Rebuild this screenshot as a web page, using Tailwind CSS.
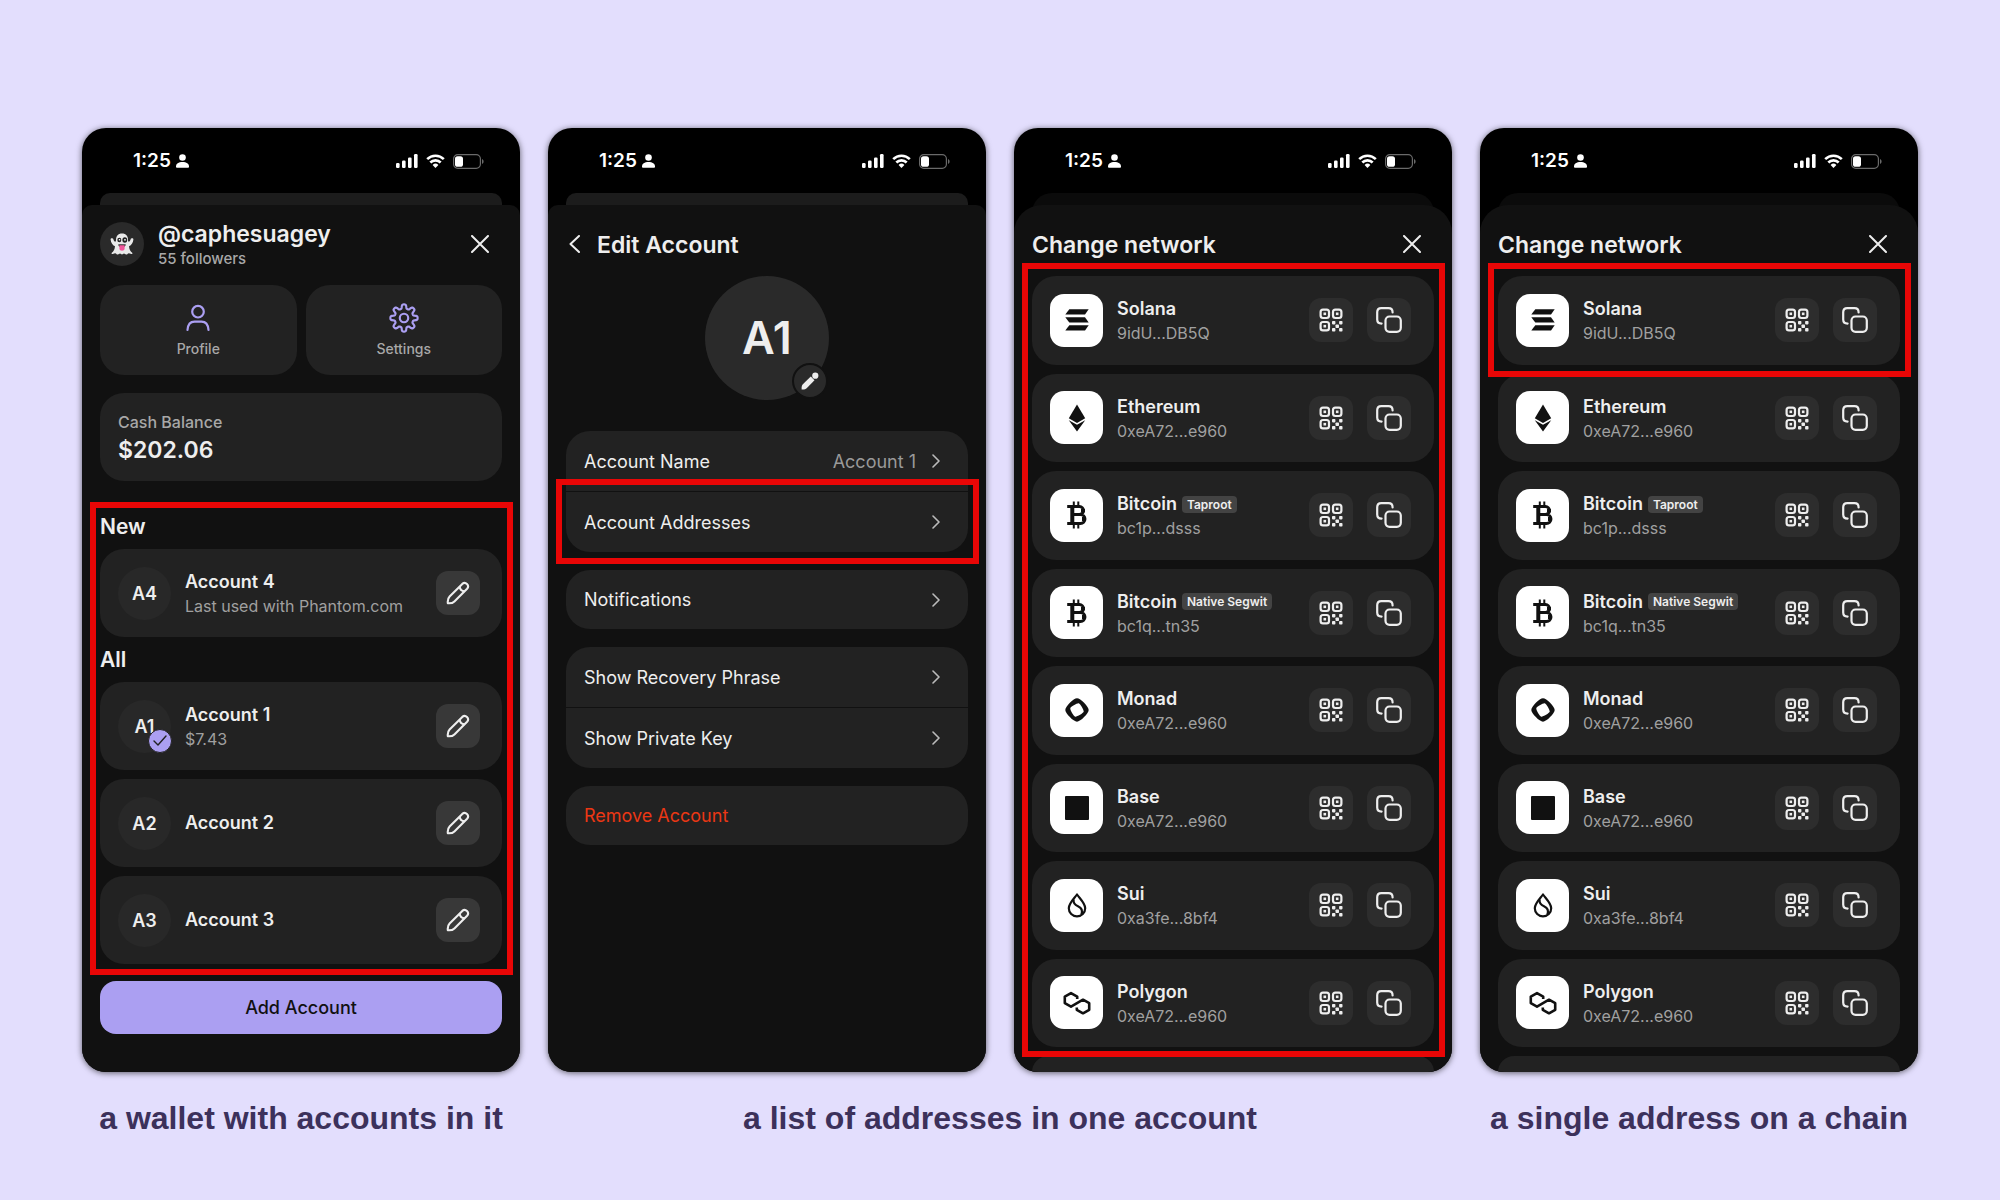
<!DOCTYPE html>
<html lang="en">
<head>
    <meta charset="UTF-8">
    <meta name="viewport" content="width=device-width, initial-scale=1.0">
    <title>Wallet, accounts and addresses</title>
    <script src="https://cdn.jsdelivr.net/npm/@tailwindcss/browser@4"></script>
</head>
<body class="min-h-screen bg-[#e3defd] font-['Inter','Liberation_Sans',sans-serif] text-[#eeeeee] antialiased">

    <!-- Icons -->
    <svg class="hidden" xmlns="http://www.w3.org/2000/svg">
        <symbol id="i-person" viewBox="0 0 13 14">
            <circle cx="6.5" cy="3.5" r="3.3" fill="currentColor"/>
            <path d="M0 12.6C0 9.6 2.6 8 6.5 8S13 9.6 13 12.6c0 .9-.4 1.2-1.2 1.2H1.2C.4 13.8 0 13.5 0 12.6z" fill="currentColor"/>
        </symbol>
        <symbol id="i-signal" viewBox="0 0 22 14">
            <g fill="currentColor">
                <rect x="0" y="9" width="3.6" height="5" rx="1.2"/>
                <rect x="6" y="6.5" width="3.6" height="7.5" rx="1.2"/>
                <rect x="12" y="3.5" width="3.6" height="10.5" rx="1.2"/>
                <rect x="18" y="0" width="3.6" height="14" rx="1.2"/>
            </g>
        </symbol>
        <symbol id="i-wifi" viewBox="0 0 19 14">
            <g fill="none" stroke="currentColor" stroke-width="2.6">
                <path d="M1.2 5.1a11.8 11.8 0 0 1 16.6 0"/>
                <path d="M4.3 8.5a7.4 7.4 0 0 1 10.4 0"/>
            </g>
            <path d="M9.5 14l-2.9-3a4.2 4.2 0 0 1 5.8 0z" fill="currentColor"/>
        </symbol>
        <symbol id="i-battery" viewBox="0 0 31 15">
            <rect x=".6" y=".6" width="26.8" height="13.8" rx="4.2" fill="none" stroke="#6a6a6a" stroke-width="1.2"/>
            <path d="M29 5v5c1-.4 1.6-1.4 1.6-2.5S30 5.4 29 5z" fill="#6a6a6a"/>
            <rect x="2" y="2.2" width="8" height="10.6" rx="2.6" fill="currentColor"/>
        </symbol>
        <symbol id="i-close" viewBox="0 0 18 18">
            <path d="M1 1l16 16M17 1L1 17" fill="none" stroke="currentColor" stroke-width="2" stroke-linecap="round"/>
        </symbol>
        <symbol id="i-back" viewBox="0 0 11 18">
            <path d="M10 1L1.5 9l8.5 8" fill="none" stroke="currentColor" stroke-width="2" stroke-linecap="round" stroke-linejoin="round"/>
        </symbol>
        <symbol id="i-next" viewBox="0 0 8 14">
            <path d="M1 1l6 6-6 6" fill="none" stroke="currentColor" stroke-width="1.6" stroke-linecap="round" stroke-linejoin="round"/>
        </symbol>
        <symbol id="i-profile" viewBox="0 0 24 27">
            <g fill="none" stroke="currentColor" stroke-width="2.2" stroke-linecap="round">
                <circle cx="12" cy="7.2" r="5.8"/>
                <path d="M1.5 25.5c.4-5.5 3-8.3 7-8.3h7c4 0 6.6 2.8 7 8.3"/>
            </g>
        </symbol>
        <symbol id="i-gear" viewBox="0 0 32 32">
            <g fill="none" stroke="currentColor" stroke-width="2.3" stroke-linejoin="round">
                <circle cx="16" cy="16" r="4.5"/>
                <path id="gear-path" d=""/>
            </g>
        </symbol>
        <symbol id="i-pencil" viewBox="0 0 24 24">
            <g fill="none" stroke="currentColor" stroke-width="2.1" stroke-linejoin="round">
                <path d="M1.8 22.2c-.3-3.2.1-4.9 1.8-6.6L16.3 2.9a3.4 3.4 0 0 1 4.8 4.8L8.4 20.4c-1.7 1.7-3.4 2.1-6.6 1.8z"/>
                <path d="M13.6 5.6c.4 2.8 2 4.4 4.8 4.8"/>
            </g>
        </symbol>
        <symbol id="i-pencil-solid" viewBox="0 0 18 18">
            <path d="M.6 17.4c-.1-2.6.1-3.9 1.5-5.3L9.8 4.5l3.7 3.7-7.6 7.7C4.5 17.3 3.2 17.5.6 17.4z" fill="currentColor"/>
            <circle cx="14.3" cy="3.7" r="3.1" fill="currentColor"/>
        </symbol>
        <symbol id="i-check" viewBox="0 0 14 11">
            <path d="M1 6l4 4 8-9" fill="none" stroke="currentColor" stroke-width="1.4" stroke-linecap="round" stroke-linejoin="round"/>
        </symbol>
        <symbol id="i-qr" viewBox="0 0 24 24">
            <g fill="none" stroke="currentColor" stroke-width="2.2">
                <rect x="1.6" y="1.6" width="8.4" height="8.4" rx="2.4"/>
                <rect x="14" y="1.6" width="8.4" height="8.4" rx="2.4"/>
                <rect x="1.6" y="14" width="8.4" height="8.4" rx="2.4"/>
            </g>
            <g fill="currentColor">
                <rect x="4.5" y="4.5" width="2.6" height="2.6"/>
                <rect x="16.9" y="4.5" width="2.6" height="2.6"/>
                <rect x="4.5" y="16.9" width="2.6" height="2.6"/>
                <rect x="13" y="13" width="3.4" height="3.4" rx=".8"/>
                <rect x="20.1" y="13" width="3.4" height="3.4" rx=".8"/>
                <rect x="16.5" y="16.5" width="3.5" height="3.5" rx=".8"/>
                <rect x="13" y="20.1" width="3.4" height="3.4" rx=".8"/>
                <rect x="20.1" y="20.1" width="3.4" height="3.4" rx=".8"/>
            </g>
        </symbol>
        <symbol id="i-copy" viewBox="0 0 26 26">
            <g fill="none" stroke="currentColor" stroke-width="2.2" stroke-linecap="round">
                <rect x="9.5" y="9.5" width="15.3" height="15.3" rx="4"/>
                <path d="M5.6 16.6C2.5 16.6 1.2 15.3 1.2 12.5V5.3c0-2.6 1.5-4.1 4.1-4.1h7.2c2.8 0 4.1 1.3 4.1 4.2"/>
            </g>
        </symbol>
        <symbol id="i-ghost" viewBox="0 0 24 22">
            <path d="M12 .5c-4 0-6 2.500-6 6.500 0 1.400-.4 2-1.200 1.600C4 8.200 3.600 7 3.400 6.200 3 4.800.4 4.800.6 6.400c.3 3 1.800 5.700 4.400 6.900-.2 3.200-1.600 5.200-3.200 6.500-.7.7 0 1.500 1 1.200 1.200-.4 2-.8 2.900-.6.9.3 1 1.100 2.100 1.100s1.400-.8 2.200-.9c.8 0 1.200.9 2 .9s1.200-.9 2-.9c.8.1 1.100.9 2.200.9s1.200-.8 2.100-1.100c.9-.2 1.700.2 2.900.6 1 .3 1.700-.5 1-1.200-1.600-1.300-3-3.300-3.200-6.500 2.600-1.200 4.100-3.900 4.400-6.900.2-1.600-2.400-1.600-2.800-.2-.2.8-.6 2-1.400 2.400-.8.4-1.200-.2-1.200-1.600 0-4-2-6.500-6-6.500z" fill="#e9e9e9"/>
            <ellipse cx="9.3" cy="7" rx="2" ry="2.3" fill="#222222"/>
            <ellipse cx="14.8" cy="7" rx="2.4" ry="2.7" fill="#222222"/>
            <circle cx="9.5" cy="6.8" r=".8" fill="#ffffff"/>
            <circle cx="15" cy="6.8" r=".9" fill="#ffffff"/>
            <path d="M8.3 11.2h7.4c.2 2.2-1.2 2.8-3.7 2.8s-3.9-.6-3.7-2.8z" fill="#333333"/>
            <path d="M9.4 12.2h5.2v3.4c0 3-5.2 3-5.2 0z" fill="#f0569a"/>
        </symbol>

        <!-- Network logos -->
        <symbol id="n-solana" viewBox="0 0 28 28">
            <g fill="#111111">
                <path d="M6.3 3.2H25.7l-3.7 5.4H2.3z"/>
                <path d="M2.3 11.3H22l3.7 5.2H6.3z"/>
                <path d="M6.3 19.2H25.7l-3.7 5.3H2.3z"/>
            </g>
        </symbol>
        <symbol id="n-ethereum" viewBox="0 0 28 28">
            <g fill="#111111">
                <path d="M14 .5l8.2 13.8L14 19.1l-8.2-4.8z"/>
                <path d="M5.8 16.2l8.2 4.6 8.2-4.6L14 27.5z"/>
            </g>
        </symbol>
        <symbol id="n-bitcoin" viewBox="0 0 28 28">
            <g fill="none" stroke="#111111">
                <path stroke-width="3" d="M4.2 5.6h12.3a3.8 3.8 0 0 1 0 7.9H9M9 13.5h8.5a4.4 4.4 0 0 1 0 8.9H4.2"/>
                <path stroke-width="4" d="M9.3 5.6v16.8M20 8v3.2M21 16v4"/>
                <path stroke-width="2" d="M10.8 .4v5M15.3 .4v5M10.8 22.6v5M15.3 22.6v5"/>
            </g>
        </symbol>
        <symbol id="n-monad" viewBox="0 0 28 28">
            <path fill="#111111" fill-rule="evenodd" d="M14 2.3c-3.4 0-11.7 8.3-11.7 11.7S10.6 25.7 14 25.7 25.7 17.4 25.7 14 17.4 2.3 14 2.3zm-1.8 18.4c-1.4-.4-5.3-7-4.9-8.5.4-1.4 7-5.3 8.5-4.9 1.4.4 5.3 7 4.9 8.5-.4 1.4-7 5.3-8.5 4.9z"/>
        </symbol>
        <symbol id="n-base" viewBox="0 0 28 28">
            <rect x="2" y="2" width="24" height="24" rx="1" fill="#111111"/>
        </symbol>
        <symbol id="n-sui" viewBox="0 0 28 28">
            <g fill="none" stroke="#111111" stroke-width="2.2" stroke-linejoin="round">
                <path d="M14 3.5c2.5 3.7 8.2 8.7 8.2 13.7a8.2 8.2 0 0 1-16.4 0c0-5 5.7-10 8.2-13.7z"/>
                <path d="M10.6 8.5c-.5 3.5 1 5.3 4.4 6.7 3.4 1.5 4.9 4.3 3.4 8.3"/>
            </g>
        </symbol>
        <symbol id="n-polygon" viewBox="0 0 28 28">
            <path fill="none" stroke="#111111" stroke-width="2.6" stroke-linejoin="round" d="M14.2 10V7.6L8 4.1 1.8 7.6v6.5L8 17.6l12-6.9 6.2 3.5v6.6L20 24.3l-6.2-3.5v-2.4"/>
        </symbol>
    </svg>

    <main class="grid grid-cols-4 gap-x-[28px] gap-y-[26px] px-[82px] pt-[128px] pb-[60px]">

        <!-- Phone 1: account list -->
        <section class="flex aspect-[438/944] flex-col overflow-hidden rounded-[24px] bg-black shadow-[0_1px_6px_rgba(0,0,0,0.6)]">
            <div data-status></div>
            <div class="mx-[18px] -mb-[18px] h-[30px] rounded-t-[10px] bg-[#1c1c1c]"></div>
            <div class="relative flex-1 rounded-t-[10px] bg-[#111111] px-[18px] pt-[17px]">
                <header class="flex h-[44px] items-center">
                    <span class="flex size-[44px] items-center justify-center rounded-full bg-[#2a2a2a]">
                        <svg class="h-[22px] w-[24px]"><use href="#i-ghost"/></svg>
                    </span>
                    <div class="ml-[14px] flex-1 pt-[2px]">
                        <h2 class="text-[23px] leading-[28px] font-semibold">@caphesuagey</h2>
                        <p class="text-[15px] leading-[22px] font-medium text-[#a8a8a8]">55 followers</p>
                    </div>
                    <button type="button" aria-label="Close" class="mr-[13px]"><svg class="size-[18px]"><use href="#i-close"/></svg></button>
                </header>

                <div class="mt-[19px] grid grid-cols-2 gap-[9px]">
                    <button type="button" class="flex h-[90px] flex-col items-center rounded-[24px] bg-[#222222] pt-[18px]">
                        <svg class="h-[30px] w-[24px] text-[#ab9ff2]"><use href="#i-profile"/></svg>
                        <span class="mt-[6px] text-[14px] leading-[20px] font-medium text-[#a8a8a8]">Profile</span>
                    </button>
                    <button type="button" class="flex h-[90px] flex-col items-center rounded-[24px] bg-[#222222] pt-[18px]">
                        <svg class="h-[30px] w-[32px] text-[#ab9ff2]"><use href="#i-gear"/></svg>
                        <span class="mt-[6px] text-[14px] leading-[20px] font-medium text-[#a8a8a8]">Settings</span>
                    </button>
                </div>

                <div class="mt-[18px] flex h-[88px] flex-col justify-center rounded-[24px] bg-[#222222] px-[18px]">
                    <p class="text-[16px] leading-[26px] font-medium text-[#a8a8a8]">Cash Balance</p>
                    <p class="text-[23px] leading-[30px] font-semibold">$202.06</p>
                </div>

                <div class="relative mt-[31px]">
                    <h3 class="mb-[7px] text-[21px] leading-[30px] font-semibold">New</h3>
                    <ul data-accounts="new" class="flex flex-col gap-[9px]"></ul>
                    <h3 class="mt-[8px] mb-[7px] text-[21px] leading-[30px] font-semibold">All</h3>
                    <ul data-accounts="all" class="flex flex-col gap-[9px]"></ul>
                    <div class="pointer-events-none absolute -top-[10px] -right-[11px] -bottom-[11px] -left-[10px] border-[6px] border-[#e90606]"></div>
                </div>

                <button type="button" class="mt-[17px] h-[53px] w-full rounded-[16px] bg-[#ab9ff2] text-[18px] font-medium text-[#111111]">Add Account</button>
            </div>
        </section>

        <!-- Phone 2: edit account -->
        <section class="flex aspect-[438/944] flex-col overflow-hidden rounded-[24px] bg-black shadow-[0_1px_6px_rgba(0,0,0,0.6)]">
            <div data-status></div>
            <div class="mx-[18px] -mb-[18px] h-[30px] rounded-t-[10px] bg-[#1c1c1c]"></div>
            <div class="relative flex-1 rounded-t-[10px] bg-[#111111] px-[18px] pt-[17px]">
                <header class="flex h-[44px] items-center">
                    <button type="button" aria-label="Back" class="ml-[3px]"><svg class="h-[18px] w-[11px]"><use href="#i-back"/></svg></button>
                    <h2 class="ml-[17px] pt-[2px] text-[23px] leading-[28px] font-semibold">Edit Account</h2>
                </header>

                <div class="relative mx-auto mt-[10px] flex size-[124px] items-center justify-center rounded-full bg-[#2a2a2a] text-[45px] font-semibold">
                    A1
                    <button type="button" aria-label="Change picture" class="absolute right-[1px] bottom-[1px] flex size-[36px] items-center justify-center rounded-full border-2 border-[#111111] bg-[#2a2a2a]">
                        <svg class="size-[18px]"><use href="#i-pencil-solid"/></svg>
                    </button>
                </div>

                <nav class="mt-[31px] flex flex-col gap-[18px] text-[18px]">
                    <div class="rounded-[24px] bg-[#222222]">
                        <a href="#name" class="flex h-[61px] items-center border-b border-[#111111] pr-[28px] pl-[18px]">
                            <span class="flex-1">Account Name</span>
                            <span class="mr-[16px] text-[#999999]">Account 1</span>
                            <svg class="h-[14px] w-[8px] text-[#bbbbbb]"><use href="#i-next"/></svg>
                        </a>
                        <a href="#addresses" class="relative flex h-[60px] items-center pr-[28px] pl-[18px]">
                            <span class="flex-1">Account Addresses</span>
                            <svg class="h-[14px] w-[8px] text-[#bbbbbb]"><use href="#i-next"/></svg>
                            <span class="pointer-events-none absolute -top-[13px] -right-[11px] -bottom-[12px] -left-[10px] border-[6px] border-[#e90606]"></span>
                        </a>
                    </div>
                    <div class="rounded-[24px] bg-[#222222]">
                        <a href="#notifications" class="flex h-[59px] items-center pr-[28px] pl-[18px]">
                            <span class="flex-1">Notifications</span>
                            <svg class="h-[14px] w-[8px] text-[#bbbbbb]"><use href="#i-next"/></svg>
                        </a>
                    </div>
                    <div class="rounded-[24px] bg-[#222222]">
                        <a href="#phrase" class="flex h-[61px] items-center border-b border-[#111111] pr-[28px] pl-[18px]">
                            <span class="flex-1">Show Recovery Phrase</span>
                            <svg class="h-[14px] w-[8px] text-[#bbbbbb]"><use href="#i-next"/></svg>
                        </a>
                        <a href="#key" class="flex h-[60px] items-center pr-[28px] pl-[18px]">
                            <span class="flex-1">Show Private Key</span>
                            <svg class="h-[14px] w-[8px] text-[#bbbbbb]"><use href="#i-next"/></svg>
                        </a>
                    </div>
                    <button type="button" class="h-[59px] rounded-[24px] bg-[#222222] px-[18px] text-left text-[#eb3714]">Remove Account</button>
                </nav>
            </div>
        </section>

        <!-- Phone 3: every address -->
        <section class="flex aspect-[438/944] flex-col overflow-hidden rounded-[24px] bg-black shadow-[0_1px_6px_rgba(0,0,0,0.6)]">
            <div data-status></div>
            <div class="mx-[18px] -mb-[18px] h-[30px] rounded-t-[20px] bg-[#0b0b0b]"></div>
            <div class="relative flex flex-1 flex-col rounded-t-[28px] bg-[#111111] px-[18px] pt-[17px]">
                <header class="mb-[10px] flex h-[44px] items-center justify-between">
                    <h2 class="pt-[2px] text-[23px] leading-[28px] font-semibold">Change network</h2>
                    <button type="button" aria-label="Close" class="mr-[13px]"><svg class="size-[18px]"><use href="#i-close"/></svg></button>
                </header>
                <div class="relative flex flex-1 flex-col">
                    <ul data-networks class="grid flex-1 auto-rows-fr gap-[9px]"></ul>
                    <div class="pointer-events-none absolute -top-[13px] -right-[11px] -bottom-[10px] -left-[10px] z-10 border-[6px] border-[#e90606]"></div>
                </div>
                <div class="mt-[9px] h-[16px] rounded-t-[24px] bg-[#222222]"></div>
            </div>
        </section>

        <!-- Phone 4: one address -->
        <section class="flex aspect-[438/944] flex-col overflow-hidden rounded-[24px] bg-black shadow-[0_1px_6px_rgba(0,0,0,0.6)]">
            <div data-status></div>
            <div class="mx-[18px] -mb-[18px] h-[30px] rounded-t-[20px] bg-[#0b0b0b]"></div>
            <div class="relative flex flex-1 flex-col rounded-t-[28px] bg-[#111111] px-[18px] pt-[17px]">
                <header class="mb-[10px] flex h-[44px] items-center justify-between">
                    <h2 class="pt-[2px] text-[23px] leading-[28px] font-semibold">Change network</h2>
                    <button type="button" aria-label="Close" class="mr-[13px]"><svg class="size-[18px]"><use href="#i-close"/></svg></button>
                </header>
                <ul data-networks="first" class="grid flex-1 auto-rows-fr gap-[9px]"></ul>
                <div class="mt-[9px] h-[16px] rounded-t-[24px] bg-[#222222]"></div>
            </div>
        </section>

        <!-- Captions -->
        <p class="text-center font-['Liberation_Sans',sans-serif] text-[32px] leading-[40px] font-bold whitespace-nowrap text-[#3c315b]">a wallet with accounts in it</p>
        <p class="col-span-2 text-center font-['Liberation_Sans',sans-serif] text-[32px] leading-[40px] font-bold whitespace-nowrap text-[#3c315b]">a list of addresses in one account</p>
        <p class="text-center font-['Liberation_Sans',sans-serif] text-[32px] leading-[40px] font-bold whitespace-nowrap text-[#3c315b]">a single address on a chain</p>
    </main>

    <script>
        const accounts = {
            new: [{ short: 'A4', name: 'Account 4', note: 'Last used with Phantom.com' }],
            all: [
                { short: 'A1', name: 'Account 1', note: '$7.43', active: true },
                { short: 'A2', name: 'Account 2' },
                { short: 'A3', name: 'Account 3' },
            ],
        };

        const networks = [
            { icon: 'solana', name: 'Solana', address: '9idU...DB5Q' },
            { icon: 'ethereum', name: 'Ethereum', address: '0xeA72...e960' },
            { icon: 'bitcoin', name: 'Bitcoin', tag: 'Taproot', address: 'bc1p...dsss' },
            { icon: 'bitcoin', name: 'Bitcoin', tag: 'Native Segwit', address: 'bc1q...tn35' },
            { icon: 'monad', name: 'Monad', address: '0xeA72...e960' },
            { icon: 'base', name: 'Base', address: '0xeA72...e960' },
            { icon: 'sui', name: 'Sui', address: '0xa3fe...8bf4' },
            { icon: 'polygon', name: 'Polygon', address: '0xeA72...e960' },
        ];

        // Status bar, the same on every phone
        document.querySelectorAll('[data-status]').forEach((el) => {
            el.innerHTML = `
                <div class="flex h-[65px] items-center pt-px pr-[36px] pl-[51px] text-white">
                    <span class="text-[19px] leading-[24px] font-semibold">1:25</span>
                    <svg class="ml-[5px] h-[14px] w-[13px]"><use href="#i-person"/></svg>
                    <svg class="ml-auto h-[14px] w-[22px]"><use href="#i-signal"/></svg>
                    <svg class="ml-[8px] h-[14px] w-[19px]"><use href="#i-wifi"/></svg>
                    <svg class="ml-[8px] h-[15px] w-[31px]"><use href="#i-battery"/></svg>
                </div>`;
        });

        document.querySelectorAll('[data-accounts]').forEach((el) => {
            el.innerHTML = accounts[el.dataset.accounts].map((a) => `
                <li class="flex h-[88px] items-center rounded-[24px] bg-[#222222] pr-[22px] pl-[18px]">
                    <span class="relative flex size-[53px] items-center justify-center rounded-full bg-[#282828] text-[18px] font-semibold">
                        ${a.short}
                        ${a.active ? '<span class="absolute -right-[1px] bottom-0 flex size-[24px] items-center justify-center rounded-full border border-[#222222] bg-[#ab9ff2] text-[#222222]"><svg class="h-[11px] w-[14px]"><use href="#i-check"/></svg></span>' : ''}
                    </span>
                    <div class="ml-[14px] flex-1">
                        <p class="text-[18px] leading-[26px] font-semibold">${a.name}</p>
                        ${a.note ? `<p class="text-[16px] leading-[22px] text-[#a0a0a0]">${a.note}</p>` : ''}
                    </div>
                    <button type="button" aria-label="Edit ${a.name}" class="flex size-[44px] items-center justify-center rounded-[12px] bg-[#383838]"><svg class="size-[24px]"><use href="#i-pencil"/></svg></button>
                </li>`).join('');
        });

        // data-networks="first" puts the red frame round the first row only
        document.querySelectorAll('[data-networks]').forEach((el) => {
            el.innerHTML = networks.map((n, i) => `
                <li class="relative flex items-center rounded-[24px] bg-[#222222] pr-[23px] pl-[18px]">
                    <span class="flex size-[53px] items-center justify-center rounded-[14px] bg-white"><svg class="size-[28px]"><use href="#n-${n.icon}"/></svg></span>
                    <div class="ml-[14px] flex-1">
                        <div class="flex items-center gap-[5px]">
                            <p class="text-[18px] leading-[26px] font-semibold">${n.name}</p>
                            ${n.tag ? `<span class="rounded-[4px] bg-[#434343] px-[5px] text-[12px] leading-[17px] font-semibold">${n.tag}</span>` : ''}
                        </div>
                        <p class="text-[16px] leading-[22px] text-[#a0a0a0]">${n.address}</p>
                    </div>
                    <button type="button" aria-label="Show QR code" class="flex size-[44px] items-center justify-center rounded-[12px] bg-[#2d2d2d]"><svg class="size-[24px]"><use href="#i-qr"/></svg></button>
                    <button type="button" aria-label="Copy address" class="ml-[14px] flex size-[44px] items-center justify-center rounded-[12px] bg-[#2d2d2d]"><svg class="size-[26px]"><use href="#i-copy"/></svg></button>
                    ${el.dataset.networks === 'first' && i === 0 ? '<span class="pointer-events-none absolute -top-[13px] -right-[11px] -bottom-[12px] -left-[10px] z-10 border-[6px] border-[#e90606]"></span>' : ''}
                </li>`).join('');
        });

        // Gear outline: a circle whose radius waves eight times
        let d = '';
        for (let k = 0; k < 144; k++) {
            const t = (k / 144) * Math.PI * 2;
            const w = Math.tanh(2.2 * Math.cos(8 * t)) / Math.tanh(2.2);
            const r = 12.3 + 2.2 * w;
            d += (k ? 'L' : 'M') + (16 + r * Math.sin(t)).toFixed(2) + ' ' + (16 - r * Math.cos(t)).toFixed(2);
        }
        document.getElementById('gear-path').setAttribute('d', d + 'z');
    </script>
</body>
</html>
